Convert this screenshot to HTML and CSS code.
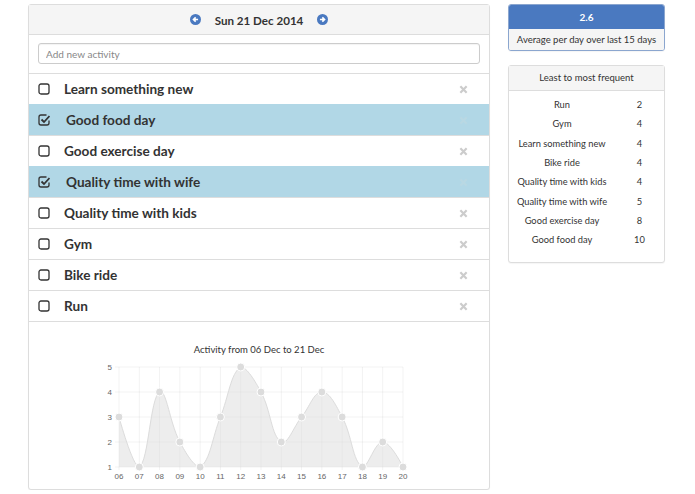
FILE: index.html
```html
<!DOCTYPE html>
<html lang="en">
<head>
<title>Activity tracker</title>
<meta charset="utf-8" />
<meta name="viewport" content="width=device-width, initial-scale=1" />
<link rel="stylesheet" href="styles.css">
<script src="chart.js"></script>
</head>
<body>
<div class="wrap">
<div class="main panel">
	<div class="day-nav">
		<svg class="nav-arrow" viewBox="0 0 12 12"><circle cx="6" cy="6" r="6" /><path d="M8.8 6H4.2M6.2 3.6L3.8 6l2.4 2.4" /></svg>
		<span class="day">Sun 21 Dec 2014</span>
		<svg class="nav-arrow" viewBox="0 0 12 12"><circle cx="6" cy="6" r="6" /><path d="M3.2 6h4.6M5.8 3.6L8.2 6L5.8 8.4" /></svg>
	</div>
	<div class="add">
		<input type="text" placeholder="Add new activity" />
	</div>
	<ul class="activities">
		<li><svg class="box" viewBox="0 0 12 12"><rect x="1" y="1" width="10" height="10" rx="2" /></svg><span class="name">Learn something new</span><svg class="remove" viewBox="0 0 10 10"><path d="M1.5 1.5l7 7M8.5 1.5l-7 7" /></svg></li>
		<li class="done"><svg class="box" viewBox="0 0 12 12"><path d="M8.5 1H3a2 2 0 0 0-2 2v6a2 2 0 0 0 2 2h6a2 2 0 0 0 2-2V6.5" /><path d="M3.5 5.5L6 8L11.5 2" /></svg><span class="name">Good food day</span><svg class="remove" viewBox="0 0 10 10"><path d="M1.5 1.5l7 7M8.5 1.5l-7 7" /></svg></li>
		<li><svg class="box" viewBox="0 0 12 12"><rect x="1" y="1" width="10" height="10" rx="2" /></svg><span class="name">Good exercise day</span><svg class="remove" viewBox="0 0 10 10"><path d="M1.5 1.5l7 7M8.5 1.5l-7 7" /></svg></li>
		<li class="done"><svg class="box" viewBox="0 0 12 12"><path d="M8.5 1H3a2 2 0 0 0-2 2v6a2 2 0 0 0 2 2h6a2 2 0 0 0 2-2V6.5" /><path d="M3.5 5.5L6 8L11.5 2" /></svg><span class="name">Quality time with wife</span><svg class="remove" viewBox="0 0 10 10"><path d="M1.5 1.5l7 7M8.5 1.5l-7 7" /></svg></li>
		<li><svg class="box" viewBox="0 0 12 12"><rect x="1" y="1" width="10" height="10" rx="2" /></svg><span class="name">Quality time with kids</span><svg class="remove" viewBox="0 0 10 10"><path d="M1.5 1.5l7 7M8.5 1.5l-7 7" /></svg></li>
		<li><svg class="box" viewBox="0 0 12 12"><rect x="1" y="1" width="10" height="10" rx="2" /></svg><span class="name">Gym</span><svg class="remove" viewBox="0 0 10 10"><path d="M1.5 1.5l7 7M8.5 1.5l-7 7" /></svg></li>
		<li><svg class="box" viewBox="0 0 12 12"><rect x="1" y="1" width="10" height="10" rx="2" /></svg><span class="name">Bike ride</span><svg class="remove" viewBox="0 0 10 10"><path d="M1.5 1.5l7 7M8.5 1.5l-7 7" /></svg></li>
		<li><svg class="box" viewBox="0 0 12 12"><rect x="1" y="1" width="10" height="10" rx="2" /></svg><span class="name">Run</span><svg class="remove" viewBox="0 0 10 10"><path d="M1.5 1.5l7 7M8.5 1.5l-7 7" /></svg></li>
	</ul>
	<div class="history">
		<div class="chart-title">Activity from 06 Dec to 21 Dec</div>
		<svg id="chart" width="460" height="125" viewBox="0 0 460 125"></svg>
	</div>
</div>
<div class="side">
	<div class="panel average">
		<div class="average-value">2.6</div>
		<div class="average-label">Average per day over last 15 days</div>
	</div>
	<div class="panel frequency">
		<div class="panel-heading">Least to most frequent</div>
		<table>
			<tr><td>Run</td><td>2</td></tr>
			<tr><td>Gym</td><td>4</td></tr>
			<tr><td>Learn something new</td><td>4</td></tr>
			<tr><td>Bike ride</td><td>4</td></tr>
			<tr><td>Quality time with kids</td><td>4</td></tr>
			<tr><td>Quality time with wife</td><td>5</td></tr>
			<tr><td>Good exercise day</td><td>8</td></tr>
			<tr><td>Good food day</td><td>10</td></tr>
		</table>
	</div>
</div>
</div>
</body>
</html>
```

FILE: chart.js
```js
"use strict";
document.addEventListener('DOMContentLoaded', function () {
	var data = [3, 1, 4, 2, 1, 3, 5, 4, 2, 3, 4, 3, 1, 2, 1];
	var labels = ['06', '07', '08', '09', '10', '11', '12', '13', '14', '15', '16', '17', '18', '19', '20'];
	var svg = document.getElementById('chart');
	var left = 90, right = 374, top = 7, bottom = 107;
	var step = (right - left) / (data.length - 1);
	var html = '';

	function y(v) { return bottom - (v - 1) * (bottom - top) / 4; }
	function clamp(v) { return Math.max(top, Math.min(bottom, v)); }

	// grid
	for (var v = 1; v <= 5; v++) {
		html += '<line class="grid" x1="' + (left - 4) + '" x2="' + right + '" y1="' + y(v) + '" y2="' + y(v) + '"/>';
		html += '<text class="tick" x="' + (left - 7) + '" y="' + (y(v) + 3) + '" text-anchor="end">' + v + '</text>';
	}
	var pts = data.map(function (d, i) { return { x: left + i * step, y: y(d) }; });
	pts.forEach(function (p, i) {
		html += '<line class="grid" x1="' + p.x + '" x2="' + p.x + '" y1="' + top + '" y2="' + (bottom + 3) + '"/>';
		html += '<text class="tick" x="' + p.x + '" y="' + (bottom + 12) + '" text-anchor="middle">' + labels[i] + '</text>';
	});

	// spline, same maths as the old Chart.js line chart (tension .4)
	var ctrl = pts.map(function (p, i) {
		if (i === 0 || i === pts.length - 1) return { inner: p, outer: p };
		var a = pts[i - 1], b = pts[i + 1];
		var d01 = Math.hypot(p.x - a.x, p.y - a.y), d12 = Math.hypot(b.x - p.x, b.y - p.y);
		var fa = 0.4 * d01 / (d01 + d12), fb = 0.4 * d12 / (d01 + d12);
		return {
			inner: { x: p.x - fa * (b.x - a.x), y: clamp(p.y - fa * (b.y - a.y)) },
			outer: { x: p.x + fb * (b.x - a.x), y: clamp(p.y + fb * (b.y - a.y)) }
		};
	});
	var d = 'M' + pts[0].x + ' ' + pts[0].y;
	for (var i = 1; i < pts.length; i++) {
		d += 'C' + ctrl[i - 1].outer.x + ' ' + ctrl[i - 1].outer.y + ' ' + ctrl[i].inner.x + ' ' + ctrl[i].inner.y + ' ' + pts[i].x + ' ' + pts[i].y;
	}
	html += '<path class="area" d="' + d + 'L' + right + ' ' + bottom + 'L' + left + ' ' + bottom + 'Z"/>';
	html += '<path class="line" d="' + d + '"/>';
	pts.forEach(function (p) {
		html += '<circle class="dot" cx="' + p.x + '" cy="' + p.y + '" r="4"/>';
	});
	svg.innerHTML = html;
});
```

FILE: styles.css
```css
body {
	font-family: Lato, "Open Sans", sans-serif;
	color: #333;
	margin: 0;
	padding: 0;
}
.wrap {
	display: flex;
	align-items: flex-start;
	gap: 18px;
	padding: 4px 0 0 28px;
}
.panel {
	border: 1px solid #ddd;
	border-radius: 3px;
	background: #fff;
	box-shadow: 0 1px 1px rgba(0,0,0,.04);
}
.main {
	width: 460px;
}
.day-nav {
	height: 29px;
	background: #f5f5f5;
	border-bottom: 1px solid #ddd;
	display: flex;
	align-items: center;
	justify-content: center;
	gap: 14px;
}
.day {
	font-weight: bold;
	font-size: 11.6px;
	padding-top: 1px;
}
.nav-arrow {
	width: 11px;
	height: 11px;
}
.nav-arrow circle {
	fill: #4a79c0;
}
.nav-arrow path {
	fill: none;
	stroke: #fff;
	stroke-width: 1.8;
}
.add {
	padding: 8px 9px 9px 9px;
}
.add input {
	display: block;
	box-sizing: border-box;
	width: 100%;
	height: 21px;
	border: 1px solid #ccc;
	border-radius: 3px;
	padding: 0 7px;
	font-family: inherit;
	font-size: 10px;
	box-shadow: inset 0 1px 1px rgba(0,0,0,.05);
}
.add input::placeholder {
	color: #888;
}
.activities {
	list-style: none;
	margin: 0;
	padding: 0;
}
.activities li {
	height: 30px;
	border-top: 1px solid #ddd;
	display: flex;
	align-items: center;
	padding: 0 21px 0 9px;
}
.activities li.done {
	background: #b1d7e6;
	border-top-color: #b1d7e6;
}
.box {
	width: 12px;
	height: 12px;
	margin-right: 14px;
}
.box rect, .box path {
	fill: none;
	stroke: #333;
	stroke-width: 1.3;
}
.done .box path + path {
	stroke-width: 1.8;
}
.name {
	flex: 1;
	font-weight: bold;
	font-size: 13.6px;
}
.done .name {
	padding-left: 2px;
}
.remove {
	width: 9px;
	height: 9px;
}
.remove path {
	stroke: #ccc;
	stroke-width: 2.4;
}
.done .remove path {
	stroke: #b9d8e3;
}
.history {
	border-top: 1px solid #ddd;
	padding: 22px 0 4px;
}
.chart-title {
	text-align: center;
	font-size: 9.5px;
	line-height: 12px;
	margin-bottom: 4px;
}
#chart {
	display: block;
}
#chart .grid {
	stroke: rgba(0,0,0,.05);
	stroke-width: 1;
}
#chart .tick {
	font-family: "Liberation Sans", Arial, sans-serif;
	font-size: 8px;
	fill: #666;
}
#chart .area {
	fill: rgba(220,220,220,.5);
}
#chart .line {
	fill: none;
	stroke: #dcdcdc;
	stroke-width: 1;
}
#chart .dot {
	fill: #dcdcdc;
	stroke: #fff;
	stroke-width: 1;
}
.side {
	width: 157px;
	display: flex;
	flex-direction: column;
	gap: 14px;
}
.average {
	border-color: #8ba6cf;
	overflow: hidden;
}
.average-value {
	background: #4a79c0;
	color: #fff;
	font-weight: bold;
	font-size: 10px;
	text-align: center;
	height: 24px;
	line-height: 24px;
}
.average-label {
	background: #f5f5f5;
	font-size: 9.5px;
	text-align: center;
	height: 21px;
	line-height: 21px;
}
.panel-heading {
	background: #f5f5f5;
	border-bottom: 1px solid #ddd;
	font-size: 9.5px;
	text-align: center;
	height: 24px;
	line-height: 24px;
}
.frequency table {
	border-collapse: collapse;
	margin: 4px 0 13px 0;
	width: 100%;
	font-size: 9.3px;
}
.frequency td {
	text-align: center;
	height: 19.3px;
	padding: 0;
}
.frequency td:first-child {
	width: 106px;
}
```
